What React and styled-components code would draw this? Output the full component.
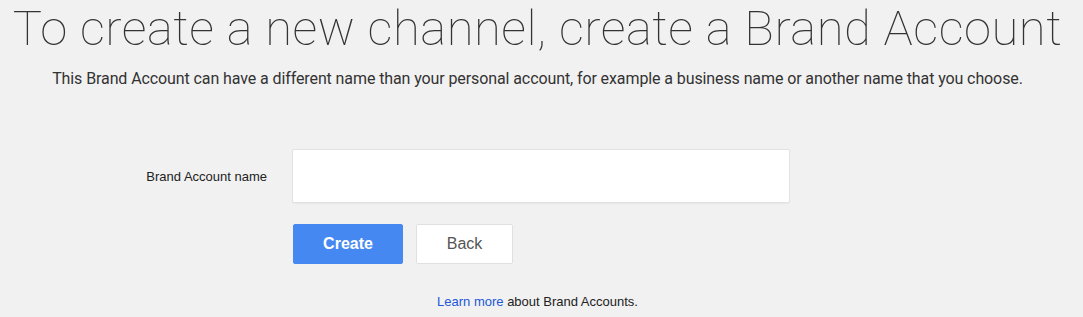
import React from 'react';
import styled, { createGlobalStyle } from 'styled-components';

const GlobalStyle = createGlobalStyle`
	html, body {
		margin: 0;
		padding: 0;
		background: #f1f1f1;
	}
	body {
		font-family: Roboto, "Liberation Sans", Arial, sans-serif;
	}
`;

const Page = styled.main`
	width: 1083px;
	height: 317px;
	overflow: hidden;
`;

const Title = styled.h1`
	margin: 3px 0 0;
	text-align: center;
	white-space: nowrap;
	font-family: Roboto, sans-serif;
	font-weight: 100;
	font-size: 49px;
	line-height: 52px;
	letter-spacing: 0.5px;
	color: #333;
	padding-right: 8px;
`;

const Intro = styled.p`
	margin: 14px 0 0;
	text-align: center;
	white-space: nowrap;
	font-family: Roboto, sans-serif;
	font-size: 16px;
	line-height: 20px;
	letter-spacing: -0.1px;
	color: #333;
	padding-right: 8px;
`;

const Form = styled.form`
	display: grid;
	grid-template-columns: 267px 498px;
	column-gap: 25px;
	row-gap: 21px;
	margin-top: 60px;
	align-items: center;
`;

const Label = styled.label`
	justify-self: end;
	font-family: "Liberation Sans", Arial, sans-serif;
	font-size: 13px;
	color: #222;
`;

const NameInput = styled.input`
	box-sizing: border-box;
	width: 498px;
	height: 54px;
	border: 1px solid #e2e2e2;
	border-radius: 2px;
	background: #fff;
	box-shadow: 0 1px 1px rgba(0, 0, 0, 0.04);
	outline: none;
	padding: 0 12px;
	font-size: 15px;
`;

const Actions = styled.div`
	grid-column: 2;
	display: flex;
	gap: 13px;
	margin-left: 1px;
`;

const Button = styled.button`
	box-sizing: border-box;
	height: 40px;
	width: ${p => (p.$primary ? '110px' : '97px')};
	border-radius: 2px;
	border: 1px solid ${p => (p.$primary ? '#4688f1' : '#e0e0e0')};
	background: ${p => (p.$primary ? '#4688f1' : '#fff')};
	color: ${p => (p.$primary ? '#fff' : '#555')};
	font-family: "Liberation Sans", Arial, sans-serif;
	font-size: 16px;
	font-weight: ${p => (p.$primary ? 700 : 400)};
	cursor: pointer;
`;

const Footnote = styled.p`
	margin: 30px 0 0;
	text-align: center;
	font-family: "Liberation Sans", Arial, sans-serif;
	font-size: 13px;
	line-height: 15px;
	color: #222;
	padding-right: 8px;

	& a {
		color: #2158d8;
		text-decoration: none;
	}
`;

export default function App() {
	return (
		<>
			<GlobalStyle />
			<Page>
				<Title>To create a new channel, create a Brand Account</Title>
				<Intro>
					This Brand Account can have a different name than your personal account, for example a business name or another
					name that you choose.
				</Intro>
				<Form onSubmit={e => e.preventDefault()}>
					<Label htmlFor="brand-name">Brand Account name</Label>
					<NameInput id="brand-name" type="text" />
					<Actions>
						<Button type="submit" $primary>
							Create
						</Button>
						<Button type="button">Back</Button>
					</Actions>
				</Form>
				<Footnote>
					<a href="#learn">Learn more</a> about Brand Accounts.
				</Footnote>
			</Page>
		</>
	);
}
